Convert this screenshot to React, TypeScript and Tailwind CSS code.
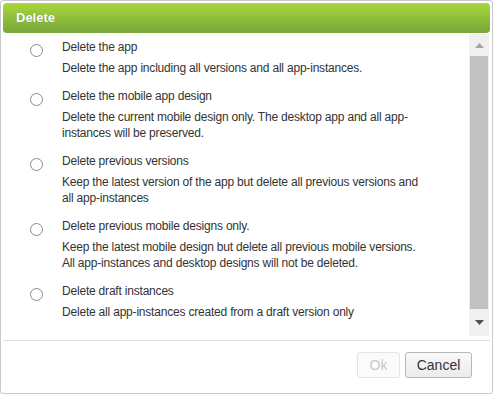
const options = [
  {
    title: "Delete the app",
    lines: ["Delete the app including all versions and all app-instances."],
  },
  {
    title: "Delete the mobile app design",
    lines: [
      "Delete the current mobile design only. The desktop app and all app-",
      "instances will be preserved.",
    ],
  },
  {
    title: "Delete previous versions",
    lines: [
      "Keep the latest version of the app but delete all previous versions and",
      "all app-instances",
    ],
  },
  {
    title: "Delete previous mobile designs only.",
    lines: [
      "Keep the latest mobile design but delete all previous mobile versions.",
      "All app-instances and desktop designs will not be deleted.",
    ],
  },
  {
    title: "Delete draft instances",
    lines: ["Delete all app-instances created from a draft version only"],
  },
];

export default function App() {
  return (
    <div className="w-[493px] h-[394px] bg-white border border-[#c9c9c9] rounded-[3px] p-[2px] flex flex-col font-['Liberation_Sans',Arial,sans-serif]">
      <div className="h-[30px] shrink-0 rounded-[4px] bg-gradient-to-b from-[#a8d83b] to-[#78a63a] flex items-center px-[13px]">
        <span className="text-white font-bold text-[13px] [text-shadow:0_0_1px_rgba(60,80,0,0.5)]">Delete</span>
      </div>

      <div className="flex h-[302px] mt-[1px] shrink-0">
        <div className="flex-1 pt-[5px]">
          {options.map((o) => (
            <div key={o.title} className="flex mb-[12px]">
              <div className="w-[13px] h-[13px] mt-[5px] ml-[27px] mr-[19px] rounded-full border border-[#8a8a8a] bg-white shrink-0" />
              <div className="text-[12px] leading-[16px] tracking-[-0.2px] text-[#333]">
                <div>{o.title}</div>
                <div className="mt-[5px]">
                  {o.lines.map((l) => (
                    <div key={l}>{l}</div>
                  ))}
                </div>
              </div>
            </div>
          ))}
        </div>

        <div className="w-[20px] mr-[1px] bg-[#f0f0f0] flex flex-col items-center">
          <div className="h-[22px] w-full flex items-center justify-center">
            <svg width="9" height="5" viewBox="0 0 9 5">
              <path d="M0 5 L4.5 0 L9 5 Z" fill="#a3a3a3" />
            </svg>
          </div>
          <div className="flex-1 w-[18px] bg-[#c1c1c1]" />
          <div className="h-[27px] w-full flex items-center justify-center">
            <svg width="9" height="5" viewBox="0 0 9 5">
              <path d="M0 0 L9 0 L4.5 5 Z" fill="#505050" />
            </svg>
          </div>
        </div>
      </div>

      <div className="mt-[4px] border-t border-[#dedede]" />

      <div className="flex justify-end gap-[5px] pt-[11px] pr-[18px]">
        <button
          disabled
          className="h-[26px] w-[43px] rounded-[3px] border border-[#e4e4e4] bg-[#fbfbfb] text-[14px] text-[#c9c9c9]"
        >
          Ok
        </button>
        <button className="h-[26px] w-[67px] rounded-[3px] border border-[#b8b8b8] bg-gradient-to-b from-[#f9f9f9] to-[#ececec] text-[14px] text-[#333]">
          Cancel
        </button>
      </div>
    </div>
  );
}
